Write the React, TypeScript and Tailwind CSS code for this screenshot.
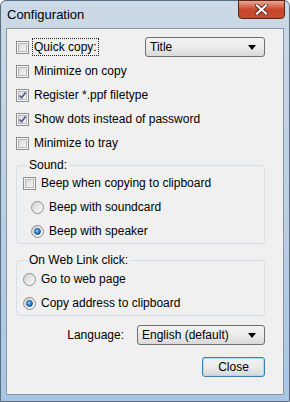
import React from "react";

const font = { fontFamily: '"Liberation Sans", Arial, sans-serif' };

const CheckBox = ({ checked }: { checked?: boolean }) => (
  <div className="flex h-[13px] w-[13px] shrink-0 items-center justify-center border border-[#8e8f8f] bg-[#f4f4f4]">
    <div className="relative h-[9px] w-[9px] border border-[#b9b9b9] bg-gradient-to-br from-[#d8d8d8] to-[#f8f8f8]">
      {checked && (
        <svg
          viewBox="0 0 9 9"
          className="absolute -left-[1px] -top-[1px] h-[9px] w-[9px]"
        >
          <path d="M1.5 4.5 L3.6 6.8 L7.6 1.6" fill="none" stroke="#4a5a8c" strokeWidth="1.6" />
        </svg>
      )}
    </div>
  </div>
);

const Radio = ({ checked }: { checked?: boolean }) => (
  <div className="flex h-[13px] w-[13px] shrink-0 items-center justify-center rounded-full border border-[#8e8f8f] bg-gradient-to-br from-[#d4d4d4] to-[#fafafa]">
    {checked && (
      <div className="h-[7px] w-[7px] rounded-full border border-[#1b4f8a] bg-[radial-gradient(circle_at_40%_35%,#9ad8ff,#1a7fd0_55%,#0d4a90)]" />
    )}
  </div>
);

const Combo = ({ text, w }: { text: string; w: string }) => (
  <div
    className={`flex h-[20px] ${w} items-center justify-between rounded-[3px] border border-[#707070] bg-gradient-to-b from-[#f2f2f2] via-[#ebebeb] to-[#d9d9d9] pl-[4px] pr-[8px] text-[12px] text-black`}
  >
    <span>{text}</span>
    <svg width="8" height="5" viewBox="0 0 8 5">
      <path d="M0 0 H8 L4 5 Z" fill="#000" />
    </svg>
  </div>
);

const Row = ({ children, className = "" }: { children: React.ReactNode; className?: string }) => (
  <div className={`flex h-[24px] items-center gap-[3px] ${className}`}>{children}</div>
);

export default function App() {
  return (
    <div
      style={font}
      className="flex h-[402px] w-[290px] flex-col rounded-t-[6px] border border-[#5b6d80] bg-gradient-to-b from-[#ccd9e6] via-[#bccfe3] to-[#a6c6e6] px-[5px] pb-[6px] text-[12px] text-black"
    >
      <div className="flex h-[27px] items-start justify-between">
        <span className="pl-[1px] pt-[6px] text-[13px] leading-[16px] text-black">Configuration</span>
        <div className="-mr-[1px] -mt-[1px] flex h-[19px] w-[47px] items-center justify-center rounded-b-[4px] border border-[#5a2418] bg-gradient-to-b from-[#e8a594] via-[#c9462c] to-[#c54a2e]">
          <svg width="13" height="11" viewBox="0 0 13 11">
            <path d="M2 1.5 L11 9.5 M11 1.5 L2 9.5" stroke="#3b1a12" strokeWidth="3.6" strokeLinecap="square" />
            <path d="M2 1.5 L11 9.5 M11 1.5 L2 9.5" stroke="#ffffff" strokeWidth="2.2" strokeLinecap="square" />
          </svg>
        </div>
      </div>
      <div className="flex flex-1 flex-col border border-[#8a96a3] bg-[#f0f0f0] pr-[18px] pl-[9px] pt-[6px] leading-[16px]">
        <Row className="justify-between">
          <div className="flex items-center gap-[3px]">
            <CheckBox />
            <span className="border border-dotted border-[#222] px-[1px]">Quick copy:</span>
          </div>
          <Combo text="Title" w="w-[120px]" />
        </Row>
        <Row>
          <CheckBox />
          <span className="pl-[2px]">Minimize on copy</span>
        </Row>
        <Row>
          <CheckBox checked />
          <span className="pl-[2px]">Register *.ppf filetype</span>
        </Row>
        <Row>
          <CheckBox checked />
          <span className="pl-[2px]">Show dots instead of password</span>
        </Row>
        <Row>
          <CheckBox />
          <span className="pl-[2px]">Minimize to tray</span>
        </Row>

        <fieldset className="mt-[2px] rounded-[3px] border border-[#d5dfe5] pl-[6px]">
          <legend className="ml-[4px] px-[2px]">Sound:</legend>
          <Row className="-mt-[2px]">
            <CheckBox />
            <span className="pl-[2px]">Beep when copying to clipboard</span>
          </Row>
          <Row className="pl-[8px]">
            <Radio />
            <span className="pl-[2px]">Beep with soundcard</span>
          </Row>
          <Row className="pl-[8px]">
            <Radio checked />
            <span className="pl-[2px]">Beep with speaker</span>
          </Row>
        </fieldset>

        <fieldset className="mt-[8px] rounded-[3px] border border-[#d5dfe5] pl-[6px]">
          <legend className="ml-[4px] px-[2px]">On Web Link click:</legend>
          <Row className="-mt-[1px]">
            <Radio />
            <span className="pl-[2px]">Go to web page</span>
          </Row>
          <Row>
            <Radio checked />
            <span className="pl-[2px]">Copy address to clipboard</span>
          </Row>
        </fieldset>

        <div className="mt-[9px] flex items-center justify-end gap-[13px]">
          <span>Language:</span>
          <Combo text="English (default)" w="w-[128px]" />
        </div>

        <div className="mt-[12px] flex justify-end">
          <div className="flex h-[20px] w-[63px] items-center justify-center rounded-[3px] border border-[#3c7fb1] bg-gradient-to-b from-[#f2f2f2] via-[#ebebeb] to-[#d6d6d6] shadow-[inset_0_0_0_1px_#a6dcf6]">
            Close
          </div>
        </div>
      </div>
    </div>
  );
}
